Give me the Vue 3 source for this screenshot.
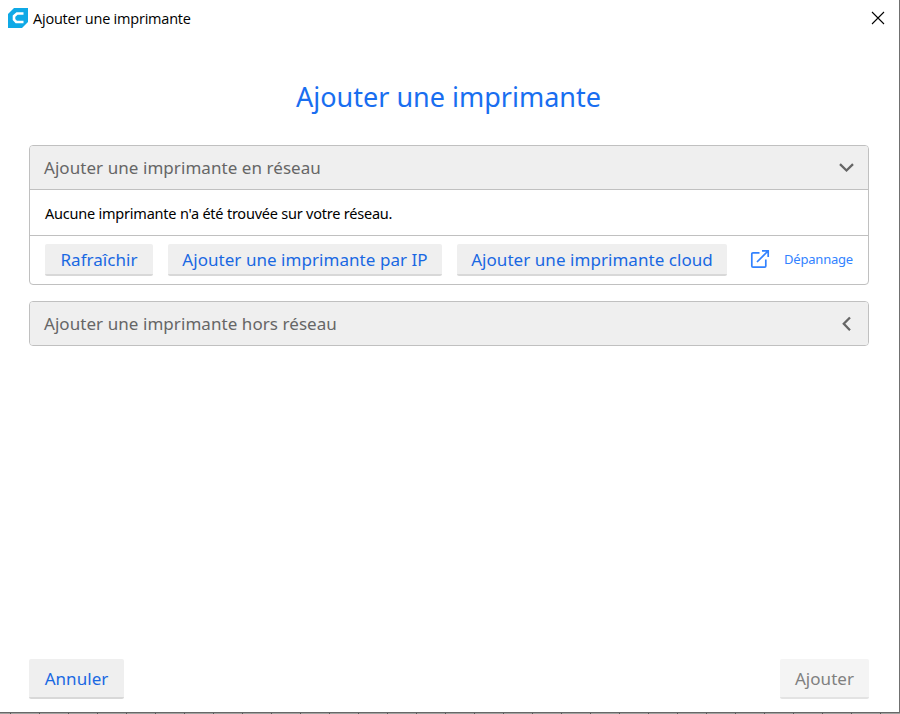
<script setup>
const networkActions = [
  { label: 'Rafraîchir', size: 'w-refresh' },
  { label: 'Ajouter une imprimante par IP', size: 'w-ip' },
  { label: 'Ajouter une imprimante cloud', size: 'w-cloud' },
]
</script>

<template>
  <div class="window">
    <div class="dialog">
      <header class="titlebar">
        <svg class="logo" width="20" height="20" viewBox="0 0 20 20">
          <path d="M6 0H20V14L14 20H0V6Z" fill="#0fa9e6" />
          <path d="M15.5 5.5H9L6 8.2V11.6L8.2 14H15.5" fill="none" stroke="#fff" stroke-width="2.6" />
        </svg>
        <span class="caption">Ajouter une imprimante</span>
        <svg class="close" width="14" height="14" viewBox="0 0 14 14">
          <path d="M1 1L13 13M13 1L1 13" stroke="#000" stroke-width="1.1" />
        </svg>
      </header>

      <h1>Ajouter une imprimante</h1>

      <main>
        <section class="panel">
          <div class="head">
            <span>Ajouter une imprimante en réseau</span>
            <svg width="16" height="16" viewBox="0 0 16 16">
              <path d="M2 4.2L8.5 10.5L15 4.2" fill="none" stroke="#666" stroke-width="2.3" />
            </svg>
          </div>
          <p class="message"><span>Aucune imprimante n'a été trouvée sur votre réseau.</span></p>
          <div class="actions">
            <button v-for="a in networkActions" :key="a.label" :class="a.size">{{ a.label }}</button>
            <a class="help">
              <svg width="20" height="20" viewBox="0 0 20 20" fill="none" stroke="#3282ff" stroke-width="1.7">
                <path d="M9.5 3.8H3Q1.8 3.8 1.8 5V17Q1.8 18.2 3 18.2H14.6Q15.8 18.2 15.8 17V10.5M7 13L18 2M12 1.8H18.2V8" />
              </svg>
              <span>Dépannage</span>
            </a>
          </div>
        </section>
        <section class="panel">
          <div class="head">
            <span>Ajouter une imprimante hors réseau</span>
            <svg width="16" height="16" viewBox="0 0 16 16">
              <path d="M12 1.5L5.8 7.8L12 14.2" fill="none" stroke="#666" stroke-width="2.3" />
            </svg>
          </div>
        </section>
      </main>

      <footer>
        <button class="large cancel">Annuler</button>
        <button class="large add" disabled>Ajouter</button>
      </footer>
    </div>
    <div class="backdrop"></div>
  </div>
</template>

<style>
body {
  background: #fff;
  overflow: hidden;
}
</style>

<style scoped>
.window {
  width: 900px;
  height: 714px;
  display: flex;
  flex-direction: column;
  font-family: 'Noto Sans', 'Open Sans', sans-serif;
}
.window * {
  box-sizing: border-box;
}
.dialog {
  height: 713px;
  display: flex;
  flex-direction: column;
  background: #fff;
  border-right: 1px solid #707070;
  border-bottom: 1px solid #686868;
}
.backdrop {
  height: 1px;
  background: repeating-linear-gradient(90deg, #a2a2a0 0 10px, #555 10px 11px, #a2a2a0 11px 29px);
}
.titlebar {
  height: 36px;
  display: flex;
  align-items: center;
  padding: 0 14px 0 8px;
}
.caption {
  flex: 1;
  margin-left: 5px;
  font-family: 'Open Sans', sans-serif;
  font-size: 14.5px;
  letter-spacing: -0.21px;
  color: #000;
}
h1 {
  margin: 39px 0 0;
  height: 44px;
  line-height: 44px;
  padding-right: 2px;
  text-align: center;
  font-size: 27px;
  font-weight: 400;
  color: #196ef0;
}
main {
  display: flex;
  flex-direction: column;
  gap: 16px;
  margin: 26px 30px 0 29px;
}
.panel {
  border: 1px solid #c0c0c0;
  border-radius: 4px;
  overflow: hidden;
}
.head {
  height: 43px;
  display: flex;
  align-items: center;
  justify-content: space-between;
  padding: 0 14px;
  background: #efefef;
  color: #666;
  font-size: 17px;
  letter-spacing: 0.06px;
}
.message {
  height: 47px;
  margin: 0;
  display: flex;
  align-items: center;
  padding: 0 0 0 15px;
  border-top: 1px solid #c0c0c0;
  border-bottom: 1px solid #c0c0c0;
  font-size: 14.5px;
  letter-spacing: -0.22px;
  color: #000;
}
.actions {
  height: 48px;
  display: flex;
  align-items: center;
  gap: 15px;
  padding: 0 15px;
}
button {
  flex: none;
  height: 32px;
  padding: 0;
  border: 0;
  border-bottom: 2px solid #d8d8d8;
  border-radius: 2px;
  background: #efefef;
  color: #1968e2;
  font-family: inherit;
  font-size: 17px;
  letter-spacing: 0.05px;
  white-space: nowrap;
}
.w-refresh {
  width: 108px;
}
.w-ip {
  width: 274px;
}
.w-cloud {
  width: 270px;
}
.help {
  display: flex;
  align-items: center;
  gap: 14px;
  margin: -2px 0 0 8px;
  font-size: 13px;
  letter-spacing: -0.2px;
  color: #3282ff;
}
footer {
  display: flex;
  justify-content: space-between;
  margin: auto 30px 13px 29px;
}
.large {
  height: 40px;
}
.cancel {
  width: 95px;
}
.add {
  width: 89px;
}
button:disabled {
  background: #f4f4f4;
  border-bottom-color: #e3e3e3;
  color: #808080;
}
</style>
